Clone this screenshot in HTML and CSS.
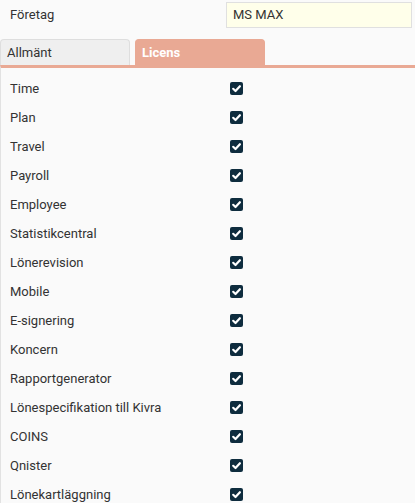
FILE: index.html
```html
<!DOCTYPE html>
<html lang="sv">
<head>
<meta charset="utf-8">
<link rel="stylesheet" href="styles.css">
</head>
<body>
<div class="top">
  <label class="top-label">Företag</label>
  <div class="top-input">MS MAX</div>
</div>
<div class="tabs">
  <div class="tab">Allmänt</div>
  <div class="tab active">Licens</div>
</div>
<div class="panel">
  <div class="row"><span class="name">Time</span><span class="cb"><svg viewBox="0 0 13 13"><path d="M3.2 6.8 L5.5 9 L9.9 4.2"/></svg></span></div>
  <div class="row"><span class="name">Plan</span><span class="cb"><svg viewBox="0 0 13 13"><path d="M3.2 6.8 L5.5 9 L9.9 4.2"/></svg></span></div>
  <div class="row"><span class="name">Travel</span><span class="cb"><svg viewBox="0 0 13 13"><path d="M3.2 6.8 L5.5 9 L9.9 4.2"/></svg></span></div>
  <div class="row"><span class="name">Payroll</span><span class="cb"><svg viewBox="0 0 13 13"><path d="M3.2 6.8 L5.5 9 L9.9 4.2"/></svg></span></div>
  <div class="row"><span class="name">Employee</span><span class="cb"><svg viewBox="0 0 13 13"><path d="M3.2 6.8 L5.5 9 L9.9 4.2"/></svg></span></div>
  <div class="row"><span class="name">Statistikcentral</span><span class="cb"><svg viewBox="0 0 13 13"><path d="M3.2 6.8 L5.5 9 L9.9 4.2"/></svg></span></div>
  <div class="row"><span class="name">Lönerevision</span><span class="cb"><svg viewBox="0 0 13 13"><path d="M3.2 6.8 L5.5 9 L9.9 4.2"/></svg></span></div>
  <div class="row"><span class="name">Mobile</span><span class="cb"><svg viewBox="0 0 13 13"><path d="M3.2 6.8 L5.5 9 L9.9 4.2"/></svg></span></div>
  <div class="row"><span class="name">E-signering</span><span class="cb"><svg viewBox="0 0 13 13"><path d="M3.2 6.8 L5.5 9 L9.9 4.2"/></svg></span></div>
  <div class="row"><span class="name">Koncern</span><span class="cb"><svg viewBox="0 0 13 13"><path d="M3.2 6.8 L5.5 9 L9.9 4.2"/></svg></span></div>
  <div class="row"><span class="name">Rapportgenerator</span><span class="cb"><svg viewBox="0 0 13 13"><path d="M3.2 6.8 L5.5 9 L9.9 4.2"/></svg></span></div>
  <div class="row"><span class="name">Lönespecifikation till Kivra</span><span class="cb"><svg viewBox="0 0 13 13"><path d="M3.2 6.8 L5.5 9 L9.9 4.2"/></svg></span></div>
  <div class="row"><span class="name">COINS</span><span class="cb"><svg viewBox="0 0 13 13"><path d="M3.2 6.8 L5.5 9 L9.9 4.2"/></svg></span></div>
  <div class="row"><span class="name">Qnister</span><span class="cb"><svg viewBox="0 0 13 13"><path d="M3.2 6.8 L5.5 9 L9.9 4.2"/></svg></span></div>
  <div class="row"><span class="name">Lönekartläggning</span><span class="cb"><svg viewBox="0 0 13 13"><path d="M3.2 6.8 L5.5 9 L9.9 4.2"/></svg></span></div>
</div>
</body>
</html>
```
FILE: styles.css
```css
html, body {
  margin: 0;
  padding: 0;
  background: #fafafa;
  font-family: Roboto, "Liberation Sans", sans-serif;
  font-size: 13px;
  color: #333;
}
.top {
  display: flex;
  align-items: center;
  height: 27px;
  padding-top: 1px;
}
.top-label {
  width: 216px;
  padding-left: 10px;
}
.top-input {
  box-sizing: border-box;
  width: 186px;
  height: 26px;
  line-height: 24px;
  border: 1px solid #e0e0e0;
  background: #ffffea;
  padding-left: 6px;
  color: #333;
}
.tabs {
  display: flex;
  gap: 5px;
  margin-top: 11px;
  height: 26px;
}
.tab {
  box-sizing: border-box;
  width: 130px;
  height: 26px;
  line-height: 25px;
  padding-left: 6px;
  background: #efefef;
  border: 1px solid #dedede;
  border-bottom: none;
  border-radius: 4px 4px 0 0;
}
.tab.active {
  background: #e9a994;
  border-color: #e9a994;
  color: #fff;
  font-weight: bold;
}
.panel {
  border-top: 3px solid #e9a994;
  border-left: 1px solid #e2e2e2;
  padding-top: 6px;
}
.row {
  display: flex;
  align-items: center;
  height: 29px;
}
.name {
  width: 220px;
  padding-left: 9px;
}
.cb {
  width: 13px;
  height: 13px;
  border-radius: 2px;
  background: #0e2c3e;
  display: flex;
}
.cb svg {
  width: 13px;
  height: 13px;
}
.cb path {
  fill: none;
  stroke: #fff;
  stroke-width: 2.2;
  stroke-linecap: round;
  stroke-linejoin: round;
}
```
